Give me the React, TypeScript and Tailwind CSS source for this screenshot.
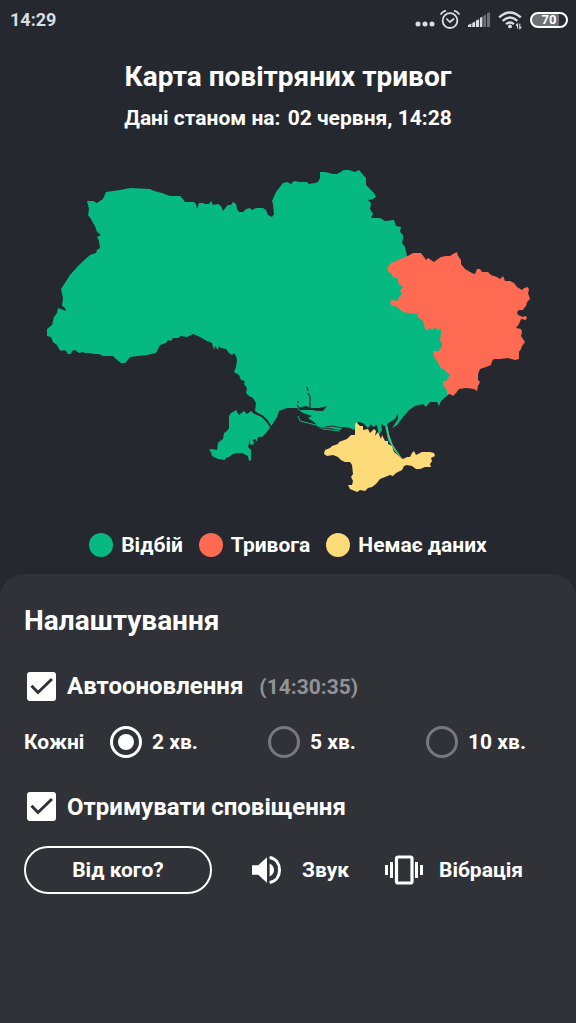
import { useState } from "react";

const CLEAR_AREA =
  "M87 201L93 201L97 203L103 199L106 192L120 190L130 188L150 189L154 191L162 193L170 196L180 196L183 199L185 202L194 202L196 204L197 209L199 203L203 203L205 204L209 204L211 201L213 205L218 204L221 206L223 211L226 207L228 205L231 205L233 202L236 204L237 209L239 212L243 212L246 209L250 208L252 210L256 208L263 208L266 210L268 215L272 217L274 214L273 204L272 201L276 192L283 183L287 182L291 184L294 181L300 182L307 182L309 184L315 183L318 182L320 178L320 172L325 172L333 174L337 174L344 170L349 170L355 172L359 170L364 176L366 178L366 185L371 190L374 193L376 197L373 199L368 200L371 203L370 209L373 214L371 218L380 218L385 221L394 220L396 226L401 227L400 232L403 235L403 239L402 243L405 247L407 256L440 270L460 330L455 385L447 396L441 401L439 406L437 402L430 402L426 407L423 404L415 406L409 410L403 417L397 425L392 428L398 419L398 413L395 419L387 424L389 434L393 445L402 458L394 450L388 440L385 426L381 424L382 430L379 435L377 425L373 427L371 424L368 428L363 423L358 422L354 430L350 428L343 427L340 430L330 428L325 428L318 426L314 422L308 418L312 416L303 413L299 410L297 408L288 408L284 409L279 411L277 417L272 425L266 433L261 438L258 437L257 441L254 442L253 445L250 444L250 439L248 447L251 450L251 460L249 461L248 456L242 453L237 453L233 454L229 457L226 458L225 460L218 459L212 456L211 452L209 450L211 449L217 450L218 443L220 441L223 439L224 433L227 431L229 428L229 416L231 413L233 412L236 410L239 415L244 411L247 414L251 411L255 414L262 417L268 423L271 427L268 421L262 416L255 411L256 403L253 398L249 396L246 393L247 388L244 384L245 381L241 380L239 375L234 372L236 367L237 360L236 356L234 353L232 355L229 353L226 349L221 348L219 346L218 350L215 346L214 350L212 343L207 341L200 337L193 334L187 337L181 336L178 338L173 338L171 341L168 340L166 343L160 345L158 349L156 353L147 355L138 356L130 357L127 361L125 363L121 363L116 359L113 356L103 356L99 354L93 354L91 353L85 353L83 352L79 353L75 350L72 351L71 354L68 354L66 351L64 350L61 351L59 349L57 345L53 342L51 337L47 336L47 329L52 325L54 317L57 313L58 308L61 309L66 311L65 308L62 306L63 298L61 289L70 275L80 264L90 255L96 253L97 250L100 248L99 241L97 237L101 235L97 232L95 226L93 223L91 219L88 215L89 209Z";

const ALERT_AREA =
  "M408 256L413 253L421 253L424 257L426 260L428 258L431 260L434 262L438 259L441 257L446 256L450 256L453 254L457 252L458 256L461 260L461 264L465 269L472 273L475 274L477 269L480 269L482 272L488 272L491 275L497 277L500 279L503 276L505 281L510 281L514 283L517 287L522 290L524 288L528 287L529 290L528 293L530 299L527 302L526 306L524 308L523 310L519 310L517 312L518 315L523 317L525 316L527 317L526 320L521 319L519 324L516 328L521 329L522 332L521 336L525 342L522 346L521 349L519 352L519 359L515 360L508 358L500 359L494 359L492 361L491 365L486 367L480 369L478 374L478 380L480 382L478 386L477 391L474 389L466 388L459 389L456 393L453 396L450 394L447 395L447 390L443 385L443 381L446 381L450 375L446 372L444 369L441 368L437 361L434 357L433 351L439 351L440 348L442 347L442 342L440 341L441 333L441 329L438 330L435 327L433 330L429 328L427 331L425 328L423 321L418 317L417 314L413 314L409 313L403 312L397 307L391 305L390 301L393 300L398 301L399 297L402 294L400 291L403 287L399 284L397 278L393 277L391 273L388 272L388 267L391 263L394 262L398 260L405 257Z";

const UNKNOWN_AREA =
  "M355 425L356 422L360 426L363 426L363 430L368 429L370 433L374 429L376 431L375 436L378 432L381 439L382 435L385 441L388 441L388 444L392 446L394 452L399 456L403 459L407 457L410 457L412 453L414 451L416 455L422 452L430 452L434 453L435 456L431 458L432 461L430 464L431 467L425 467L420 469L416 469L412 466L407 465L404 466L402 470L396 473L393 476L390 475L385 477L380 479L376 484L372 487L368 488L365 491L360 490L357 492L350 489L348 485L352 485L353 481L351 477L353 474L352 465L350 462L345 462L341 460L338 457L333 455L327 456L324 454L325 450L330 448L332 446L338 444L339 442L347 439L351 435L355 435Z";

const LEGEND = [
  { label: "Відбій", color: "bg-[#06b981]" },
  { label: "Тривога", color: "bg-[#ff6b52]" },
  { label: "Немає даних", color: "bg-[#fedb79]" },
];

function StatusBar() {
  return (
    <div className="flex h-10 items-center justify-between pr-2 pl-[10px] text-[#dcdde0]">
      <span className="text-lg font-bold">14:29</span>
      <div className="flex items-center gap-2">
        <div className="flex items-center gap-1">
          <svg viewBox="0 0 22 20" className="h-5 w-[22px]" fill="currentColor" aria-hidden="true">
            <circle cx="4" cy="14" r="2.5" />
            <circle cx="11" cy="14" r="2.5" />
            <circle cx="18" cy="14" r="2.5" />
          </svg>
          <svg viewBox="0 0 20 20" className="h-5 w-5" fill="none" stroke="currentColor" strokeLinecap="round" aria-hidden="true">
            <circle cx="10" cy="10.6" r="7.4" strokeWidth="1.8" />
            <path d="M6.8 9L10 12L13.6 9" strokeWidth="1.7" />
            <path d="M1 3.9Q2.6 1.6 5.3 0.9M19 3.9Q17.4 1.6 14.7 0.9" strokeWidth="1.8" />
          </svg>
        </div>
        <svg viewBox="0 0 22 16" className="h-4 w-[22px]" fill="currentColor" aria-hidden="true">
          <path d="M0 15V13L3.4 11.6V15ZM4.2 15V11L7.2 9.6V15ZM8 15V8.6L11 7.2V15Z" />
          <path d="M11.9 15V6L14.4 4.6V15Z" />
          <path d="M15.4 15V4L18 2.4V15ZM19 15V1.4L22 0V15Z" opacity="0.4" />
        </svg>
        <svg viewBox="0 0 24 20" className="h-5 w-6" fill="none" stroke="currentColor" strokeWidth="2.4" aria-hidden="true">
          <path d="M1.2 7.4Q11.7 -2.4 22.8 7.4M4.7 10.8Q12 4.4 19.4 10.8M8.1 14.2Q12 10.8 15.9 14.2" />
          <circle cx="12" cy="16.4" r="1.9" fill="currentColor" stroke="none" />
          <path d="M19.6 18.5V14L18 15.5M21.8 13.8V18.5L23.4 17" strokeWidth="1.1" />
        </svg>
        <div className="flex h-4 w-[38px] items-center justify-center rounded-full border-2 border-current bg-linear-to-r from-[#6d7075] from-80% to-[#25282f] to-80% text-[13px] leading-3 font-bold text-white">
          70
        </div>
      </div>
    </div>
  );
}

function CheckOption({ id, label, note, checked, onChange }: { id: string; label: string; note?: string; checked: boolean; onChange: (v: boolean) => void }) {
  return (
    <div className="flex h-10 items-center pl-[3px]">
      <span className="grid">
        <input
          id={id}
          type="checkbox"
          checked={checked}
          onChange={(e) => onChange(e.target.checked)}
          className="peer col-start-1 row-start-1 h-[29px] w-[29px] appearance-none rounded-[3px] border-2 border-white checked:bg-white"
        />
        <svg viewBox="0 0 29 29" className="pointer-events-none invisible col-start-1 row-start-1 h-[29px] w-[29px] peer-checked:visible" fill="none" stroke="#313237" strokeWidth="3" aria-hidden="true">
          <path d="M4.5 13.8L11 20.5L25 7" />
        </svg>
      </span>
      <div className="flex items-baseline gap-4 pt-0.5 pl-[11px] font-bold">
        <label htmlFor={id} className="text-2xl">
          {label}
        </label>
        {note && <span className="text-[21px] text-[#929397]">{note}</span>}
      </div>
    </div>
  );
}

export default function App() {
  const [auto, setAuto] = useState(true);
  const [notify, setNotify] = useState(true);
  const [period, setPeriod] = useState("2");

  return (
    <div className="flex min-h-screen flex-col bg-[#25282f] font-['Roboto',sans-serif] text-white">
      <StatusBar />
      <header className="pt-[19px] text-center font-bold">
        <h1 className="text-[28px] leading-9">Карта повітряних тривог</h1>
        <p className="pt-[7px] text-[21px] leading-8">
          Дані станом на: <span className="pl-0.5">02 червня, 14:28</span>
        </p>
      </header>

      <svg viewBox="0 150 576 360" className="mt-4 w-full" role="img" aria-label="Карта">
        <path d={CLEAR_AREA} fill="#06b981" />
        <path d="M298 408L306 406L312 408L319 408L327 406L323 411L317 411L312 410L306 410L300 410Z" fill="#25282f" />
        <path d="M307 387L308 391M308 393L310 397V407M298 401V403M297 405L299 408" fill="none" stroke="#25282f" strokeWidth="1.2" />
        <path d="M298 416L300 421L308 423L316 425L323 429L340 431" fill="none" stroke="#06b981" strokeWidth="1" />
        <path d="M325 427L332 426L343 428" fill="none" stroke="#25282f" strokeWidth="1" />
        <path d="M253 412L262 416L267 421L271 427" fill="none" stroke="#25282f" strokeWidth="2" />
        <path d="M253 441L256 440M258 439L261 437" fill="none" stroke="#25282f" strokeWidth="2" />
        <path d={UNKNOWN_AREA} fill="#fedb79" />
        <path d="M387 427Q389 446 402 459" fill="none" stroke="#7fc97c" strokeWidth="1" />
        <path d={ALERT_AREA} fill="#ff6b52" />
      </svg>

      <ul className="flex items-center justify-center gap-4 pt-[23px] pb-[17px]">
        {LEGEND.map((item) => (
          <li key={item.label} className="flex h-6 items-center gap-2 text-[21px] font-bold">
            <span className={`h-6 w-6 rounded-full ${item.color}`} />
            <span className="pt-0.5">{item.label}</span>
          </li>
        ))}
      </ul>

      <main className="flex-1 rounded-t-3xl bg-[#313237] px-6 pt-[29px] pb-8">
        <h2 className="text-[28px] leading-9 font-bold">Налаштування</h2>
        <div className="flex flex-col gap-4 pt-[27px]">
          <CheckOption id="auto" label="Автооновлення" note="(14:30:35)" checked={auto} onChange={setAuto} />
          <div role="radiogroup" aria-labelledby="period-label" className="flex h-10 items-center text-[21px] font-bold">
            <span id="period-label" className="w-[86px] pt-0.5">Кожні</span>
            <div className="flex flex-1 justify-between pr-[26px]">
              {["2", "5", "10"].map((value) => (
                <label key={value} className="flex items-center gap-[10px]">
                  <input
                    type="radio"
                    name="period"
                    value={value}
                    checked={period === value}
                    onChange={() => setPeriod(value)}
                    className="grid h-8 w-8 appearance-none place-items-center rounded-full border-3 border-[#77787b] before:h-4 before:w-4 before:rounded-full checked:border-white checked:before:bg-white"
                  />
                  <span className="pt-0.5">{value} хв.</span>
                </label>
              ))}
            </div>
          </div>
        </div>
        <div className="pt-6">
          <CheckOption id="notify" label="Отримувати сповіщення" checked={notify} onChange={setNotify} />
        </div>
        <div className="flex items-center pt-5 text-[21px] font-bold">
          <button type="button" className="h-12 w-[188px] rounded-full border-2 border-white pt-0.5">
            Від кого?
          </button>
          <button type="button" className="ml-10 flex items-center gap-5">
            <svg viewBox="0 0 30 28" className="h-7 w-[30px]" fill="#fff" aria-hidden="true">
              <path d="M0 9.3H6.2L15 1.2V26.8L6.2 18.7H0Z" />
              <path d="M17.6 7.6Q22 9.8 22 14T17.6 20.4Z" />
              <path d="M17.6 1.6C24.2 2.6 27.5 8 27.5 14S24.2 25.4 17.6 26.4" fill="none" stroke="#fff" strokeWidth="3" />
            </svg>
            <span className="pt-0.5">Звук</span>
          </button>
          <button type="button" className="ml-9 flex items-center gap-4">
            <svg viewBox="0 0 38 30" className="h-[30px] w-[38px]" fill="#fff" aria-hidden="true">
              <path d="M0 10H3V20H0ZM5 7H8V23H5ZM30 7H33V23H30ZM35 10H38V20H35Z" />
              <rect x="11.5" y="2" width="15.5" height="26" rx="1.5" fill="none" stroke="#fff" strokeWidth="3.2" />
            </svg>
            <span className="pt-0.5">Вібрація</span>
          </button>
        </div>
      </main>
    </div>
  );
}
